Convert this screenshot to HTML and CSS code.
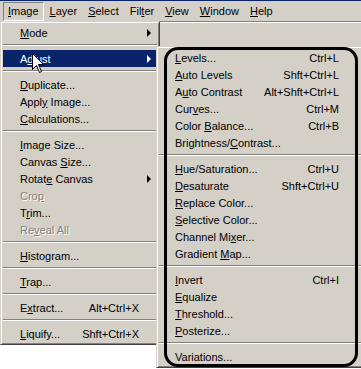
FILE: index.html
```html
<!DOCTYPE html>
<html>
<head>
  <title>Image menu - Adjust</title>
  <link rel="stylesheet" href="styles.css">
</head>
<body>
<div class="menubar">
  <span class="mb-item pressed"><u>I</u>mage</span>
  <span class="mb-item"><u>L</u>ayer</span>
  <span class="mb-item"><u>S</u>elect</span>
  <span class="mb-item">Fil<u>t</u>er</span>
  <span class="mb-item"><u>V</u>iew</span>
  <span class="mb-item"><u>W</u>indow</span>
  <span class="mb-item"><u>H</u>elp</span>
</div>

<div class="workspace">
  <div class="menu main-menu">
    <div class="item"><span class="label"><u>M</u>ode</span><span class="arrow"></span></div>
    <div class="sep"></div>
    <div class="item active"><span class="label">A<u>d</u>just</span><span class="arrow"></span></div>
    <div class="sep"></div>
    <div class="item"><span class="label"><u>D</u>uplicate...</span><span class="slot"></span></div>
    <div class="item"><span class="label">Appl<u>y</u> Image...</span><span class="slot"></span></div>
    <div class="item"><span class="label"><u>C</u>alculations...</span><span class="slot"></span></div>
    <div class="sep"></div>
    <div class="item"><span class="label"><u>I</u>mage Size...</span><span class="slot"></span></div>
    <div class="item"><span class="label">Canvas <u>S</u>ize...</span><span class="slot"></span></div>
    <div class="item"><span class="label">Rotat<u>e</u> Canvas</span><span class="arrow"></span></div>
    <div class="item disabled"><span class="label">Cro<u>p</u></span><span class="slot"></span></div>
    <div class="item"><span class="label">T<u>r</u>im...</span><span class="slot"></span></div>
    <div class="item disabled"><span class="label">Re<u>v</u>eal All</span><span class="slot"></span></div>
    <div class="sep"></div>
    <div class="item"><span class="label"><u>H</u>istogram...</span><span class="slot"></span></div>
    <div class="sep"></div>
    <div class="item"><span class="label"><u>T</u>rap...</span><span class="slot"></span></div>
    <div class="sep"></div>
    <div class="item"><span class="label">E<u>x</u>tract...</span><span class="key">Alt+Ctrl+X</span><span class="slot"></span></div>
    <div class="sep"></div>
    <div class="item"><span class="label"><u>L</u>iquify...</span><span class="key">Shft+Ctrl+X</span><span class="slot"></span></div>
  </div>
  <div class="doc"></div>

  <div class="menu sub-menu">
    <div class="item"><span class="label"><u>L</u>evels...</span><span class="key">Ctrl+L</span></div>
    <div class="item"><span class="label"><u>A</u>uto Levels</span><span class="key">Shft+Ctrl+L</span></div>
    <div class="item"><span class="label">A<u>u</u>to Contrast</span><span class="key">Alt+Shft+Ctrl+L</span></div>
    <div class="item"><span class="label">Cur<u>v</u>es...</span><span class="key">Ctrl+M</span></div>
    <div class="item"><span class="label">Color <u>B</u>alance...</span><span class="key">Ctrl+B</span></div>
    <div class="item"><span class="label">Brightness/<u>C</u>ontrast...</span></div>
    <div class="sep"></div>
    <div class="item"><span class="label"><u>H</u>ue/Saturation...</span><span class="key">Ctrl+U</span></div>
    <div class="item"><span class="label"><u>D</u>esaturate</span><span class="key">Shft+Ctrl+U</span></div>
    <div class="item"><span class="label"><u>R</u>eplace Color...</span></div>
    <div class="item"><span class="label"><u>S</u>elective Color...</span></div>
    <div class="item"><span class="label">Channel Mi<u>x</u>er...</span></div>
    <div class="item"><span class="label">Gradient <u>M</u>ap...</span></div>
    <div class="sep"></div>
    <div class="item"><span class="label"><u>I</u>nvert</span><span class="key">Ctrl+I</span></div>
    <div class="item"><span class="label"><u>E</u>qualize</span></div>
    <div class="item"><span class="label"><u>T</u>hreshold...</span></div>
    <div class="item"><span class="label"><u>P</u>osterize...</span></div>
    <div class="sep"></div>
    <div class="item"><span class="label">Variations...</span></div>
  </div>

  <!-- hand drawn callout round the submenu -->
  <div class="callout"></div>

  <svg class="cursor" width="12" height="20" viewBox="0 0 12 20">
    <path d="M0.5 0.5 L0.5 16.5 L4.5 12.5 L7.5 19.5 L9.5 18.5 L6.5 11.5 L11.5 11.5 Z" fill="#fff" stroke="#000" stroke-width="1"/>
  </svg>
</div>
</body>
</html>
```

FILE: styles.css
```css
body {
    margin: 0;
    width: 361px;
    height: 369px;
    overflow: hidden;
    background: #ffffff;
    font-family: "Liberation Sans", Arial, sans-serif;
    font-size: 11px;
    color: #000000;
}

u {
    text-decoration: underline;
    text-underline-offset: 1px;
}

.menubar {
    display: flex;
    align-items: center;
    gap: 1px;
    height: 20px;
    padding-left: 3px;
    background: #d4d0c8;
    border-top: 1px solid #0a246a;
}

.mb-item {
    height: 17px;
    line-height: 17px;
    padding: 0 4px;
    border: 1px solid transparent;
}

.mb-item.pressed {
    border-color: #808080 #ffffff #ffffff #808080;
}

.workspace {
    position: relative;
    display: flex;
    align-items: flex-start;
    height: 348px;
}

.doc {
    flex: 1;
    height: 25px;
    background: #d4d0c8;
    border-top: 1px solid #808080;
    box-shadow: inset 0 1px #ffffff;
}

.menu {
    background: #d4d0c8;
    border: 1px solid;
    border-color: #d4d0c8 #404040 #404040 #d4d0c8;
    box-shadow: inset 1px 1px #ffffff, inset -1px -1px #808080;
    padding: 2px;
}

.main-menu {
    width: 160px;
    box-sizing: border-box;
    flex: none;
}

.sub-menu {
    position: absolute;
    left: 156px;
    top: 25px;
    width: 208px;
    box-sizing: border-box;
}

.item {
    display: flex;
    align-items: center;
    height: 17px;
    white-space: nowrap;
}

.main-menu .item {
    padding: 0 5px 0 17px;
}

.sub-menu .item {
    padding: 0 22px 0 16px;
}

.label {
    flex: 1;
}

.key {
    text-align: right;
}

.slot,
.arrow {
    width: 13px;
    height: 17px;
    position: relative;
}

.arrow::after {
    content: "";
    position: absolute;
    right: 1px;
    top: 5px;
    border-left: 4px solid #000000;
    border-top: 4px solid transparent;
    border-bottom: 4px solid transparent;
}

.item.active {
    background: #0a246a;
    color: #ffffff;
}

.item.active .arrow::after {
    border-left-color: #ffffff;
}

.item.disabled {
    color: #808080;
    text-shadow: 1px 1px 0 #ffffff;
}

.sep {
    height: 0;
    margin: 3px 0 4px;
    border-top: 1px solid #808080;
    border-bottom: 1px solid #ffffff;
}

.callout {
    position: absolute;
    left: 164px;
    top: 26px;
    width: 188px;
    height: 314px;
    border: 3px solid #000000;
    border-radius: 14px;
}

.cursor {
    position: absolute;
    left: 32px;
    top: 32px;
}
```
